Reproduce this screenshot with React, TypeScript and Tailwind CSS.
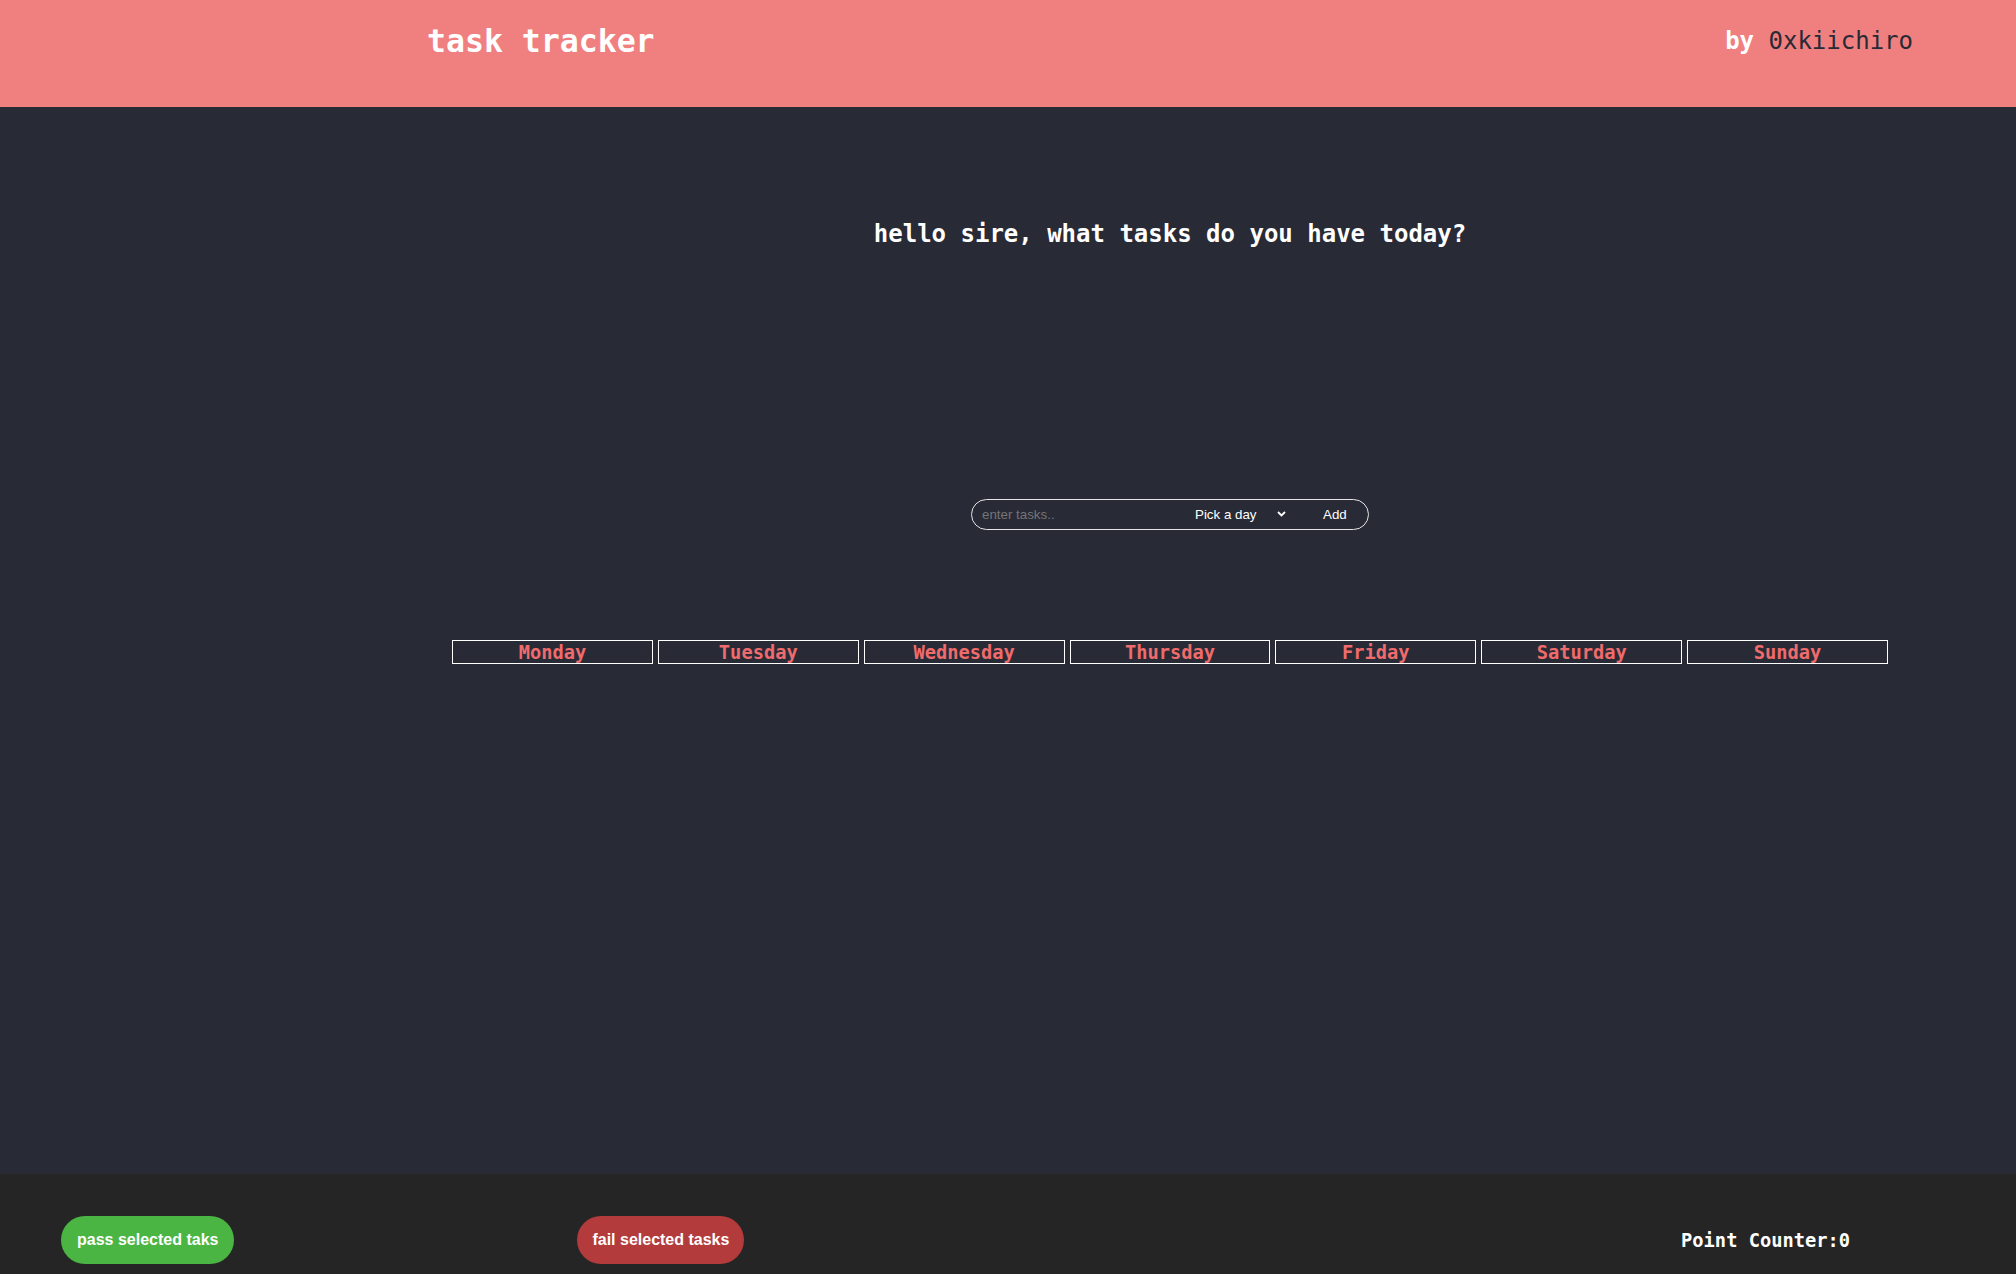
import { useState } from "react";

const DAYS = ["Monday", "Tuesday", "Wednesday", "Thursday", "Friday", "Saturday", "Sunday"];

const mono = "font-['DejaVu_Sans_Mono','Liberation_Mono',monospace]";
const sans = "font-['Liberation_Sans',Arial,sans-serif]";

function Header() {
  return (
    <header className={`flex h-[107px] shrink-0 items-start justify-between bg-[#f08080] pl-[427px] pr-[103px] ${mono}`}>
      <h1 className="mt-[26px] text-[31.5px] font-bold leading-none text-white">task tracker</h1>
      <p className="mt-[29px] text-[24px] leading-none">
        <span className="font-bold text-white">by </span>
        <span className="text-[#282a36]">0xkiichiro</span>
      </p>
    </header>
  );
}

function TaskInput() {
  const [task, setTask] = useState("");
  const [day, setDay] = useState("");
  return (
    <div className={`flex h-[31px] w-[398px] items-center rounded-full border border-[#e5e5e5] ${sans} text-[13.33px] text-white`}>
      <input
        value={task}
        onChange={(e) => setTask(e.target.value)}
        placeholder="enter tasks.."
        className="w-[213px] bg-transparent pl-[10px] text-white outline-none placeholder:text-[#757575]"
      />
      <div className="ml-[10px] flex items-center">
        <select
          value={day}
          onChange={(e) => setDay(e.target.value)}
          className="w-[82px] appearance-none bg-transparent text-white outline-none"
        >
          <option value="" className="bg-[#282a36]">Pick a day</option>
          {DAYS.map((d) => (
            <option key={d} value={d} className="bg-[#282a36]">
              {d}
            </option>
          ))}
        </select>
        <svg width="9" height="6" viewBox="0 0 9 6" className="pointer-events-none">
          <path d="M1 1l3.5 3.5L8 1" fill="none" stroke="white" strokeWidth="1.8" />
        </svg>
      </div>
      <button className="ml-[37px] text-white">Add</button>
    </div>
  );
}

function Footer() {
  return (
    <footer className="flex h-[100px] shrink-0 items-start bg-[#252525] pt-[42px]">
      <button className={`ml-[61px] h-[48px] rounded-full bg-[#4bb543] px-[16px] text-[16px] font-bold text-white ${sans}`}>
        pass selected taks
      </button>
      <button className={`ml-[343px] h-[48px] rounded-full bg-[#b33b3b] px-[15px] text-[16px] font-bold text-white ${sans}`}>
        fail selected tasks
      </button>
      <p className={`ml-auto mr-[166px] mt-[16px] text-[18.72px] font-bold leading-none text-white ${mono}`}>
        Point Counter:0
      </p>
    </footer>
  );
}

export default function App() {
  return (
    <div className="flex min-h-screen flex-col bg-[#282a36]">
      <Header />
      <main className="flex-1">
        <div className="ml-[452px] flex w-[1436px] flex-col items-center">
          <h2 className={`mt-[115px] text-[24px] font-bold leading-none text-white ${mono}`}>
            hello sire, what tasks do you have today?
          </h2>
          <div className="mt-[253px]">
            <TaskInput />
          </div>
          <div className="mt-[110px] grid w-full grid-cols-7 gap-[5px]">
            {DAYS.map((d) => (
              <div
                key={d}
                className={`h-[24px] border border-white text-center text-[18.72px] font-bold leading-[24px] text-[#f06b6b] ${mono}`}
              >
                {d}
              </div>
            ))}
          </div>
        </div>
      </main>
      <Footer />
    </div>
  );
}
